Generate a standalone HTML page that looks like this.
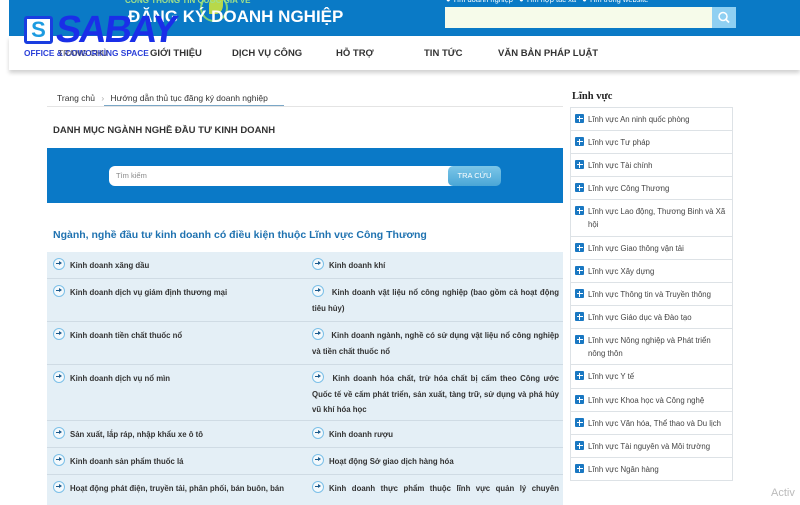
<!DOCTYPE html>
<html><head><meta charset="utf-8"><style>
*{margin:0;padding:0;box-sizing:border-box}
body{width:800px;height:500px;overflow:hidden;background:#fff;font-family:"Liberation Sans","DejaVu Sans",sans-serif;position:relative}
.a{position:absolute}
.hdr{left:9px;top:0;width:791px;height:36px;background:#0a7ac6}
.nav{left:9px;top:36px;width:791px;height:34px;background:#fff;box-shadow:0 3px 4px rgba(0,0,0,.18)}
.nv{top:48px;font-size:9.5px;font-weight:bold;color:#333}
.t{font-size:8.5px;color:#333;line-height:14px}
.row{left:47px;width:516px;background:#e4eff6;border-bottom:1px solid #cfdbe4}
.ic{display:inline-block;width:12px;height:12px;border:1.5px solid #7cc0e8;border-radius:50%;vertical-align:-2px;margin-right:5px;position:relative;background:#f4f9fc}
.ic:after{content:"";position:absolute;left:2px;top:3.7px;width:4px;height:1.4px;background:#1c5a8c}
.ic:before{content:"";position:absolute;left:4.5px;top:2.4px;border-left:3px solid #1c5a8c;border-top:2px solid transparent;border-bottom:2px solid transparent}
.c{position:absolute;font-size:7.8px;font-weight:bold;color:#333;line-height:15.5px}
.si{left:570px;width:163px;border:1px solid #dde2e6;border-top:none;font-size:7.8px;color:#444;line-height:13px;padding:5px 4px 0 17px;background:#fff}
.pl{position:absolute;left:4px;top:6px;width:9px;height:9px;background:#1a78c2;border-radius:1px}
.pl:before{content:"";position:absolute;left:3.6px;top:1.5px;width:1.8px;height:6px;background:#fff}
.pl:after{content:"";position:absolute;left:1.5px;top:3.6px;width:6px;height:1.8px;background:#fff}
</style></head><body>
<div class="a hdr"></div>
<div class="a" style="left:195px;top:0;width:40px;height:36px;border-radius:50%;"><div style="position:absolute;left:5px;top:-6px;width:28px;height:28px;border-radius:50%;border:2px solid #7fd07a;border-top-color:transparent"></div><div style="position:absolute;left:14px;top:-4px;width:14px;height:18px;background:#b8d84a;border-radius:50% 0 50% 0"></div></div>
<div class="a" style="left:125px;top:-4px;font-size:8px;color:#9fe08a;font-weight:bold">CỔNG THÔNG TIN QUỐC GIA VỀ</div>
<div class="a" style="left:128px;top:7px;font-size:17px;color:#fff;font-weight:bold">ĐĂNG KÝ DOANH NGHIỆP</div>
<div class="a" style="left:446px;top:-5px;font-size:7.5px;color:#fff">● Tìm doanh nghiệp &nbsp; ● Tìm hợp tác xã &nbsp; ● Tìm trong website</div>
<div class="a" style="left:445px;top:7px;width:267px;height:21px;background:#f6fbea"></div>
<div class="a" style="left:712px;top:7px;width:24px;height:21px;background:#8fd0f2"><svg width="24" height="21"><circle cx="11" cy="9.5" r="4" fill="none" stroke="#fff" stroke-width="1.5"/><line x1="14" y1="12.5" x2="17" y2="15.5" stroke="#fff" stroke-width="1.8"/></svg></div>
<div class="a nav"></div>
<div class="a nv" style="left:150px">GIỚI THIỆU</div>
<div class="a nv" style="left:232px">DỊCH VỤ CÔNG</div>
<div class="a nv" style="left:336px">HỖ TRỢ</div>
<div class="a nv" style="left:424px">TIN TỨC</div>
<div class="a nv" style="left:498px">VĂN BẢN PHÁP LUẬT</div>
<!-- logo -->
<div class="a" style="left:24px;top:16px;width:29px;height:28px;border:3px solid #1a3ee0;border-radius:3px;background:#fff"><div style="font-size:22px;font-weight:bold;color:#1d9be0;line-height:22px;text-align:center">S</div></div>
<div class="a" style="left:56px;top:10px;font-size:38px;font-weight:900;color:#1a2ee8;letter-spacing:-2px;line-height:40px;transform:skewX(-8deg)">SABAY</div>
<div class="a" style="left:24px;top:48px;font-size:8.3px;font-weight:bold;color:#2a3fd8">OFFICE &amp; COWORKING SPACE</div>
<div class="a" style="left:58px;top:48px;font-size:8.3px;font-weight:bold;color:#334;opacity:.6">TRANG CHỦ</div>
<!-- breadcrumb -->
<div class="a t" style="left:57px;top:91px">Trang chủ <span style="color:#aaa;margin:0 4px">›</span> Hướng dẫn thủ tục đăng ký doanh nghiệp</div>
<div class="a" style="left:47px;top:106px;width:516px;height:1px;background:#e4e4e4"></div>
<div class="a" style="left:104px;top:105px;width:180px;height:1px;background:#7aa7c7"></div>
<div class="a" style="left:53px;top:125px;font-size:9.5px;font-weight:bold;color:#333">DANH MỤC NGÀNH NGHỀ ĐẦU TƯ KINH DOANH</div>
<div class="a" style="left:47px;top:148px;width:516px;height:55px;background:#0a79c7"></div>
<div class="a" style="left:109px;top:166px;width:350px;height:20px;background:#fff;border-radius:6px;font-size:7.5px;color:#888;padding:5px 7px">Tìm kiếm</div>
<div class="a" style="left:448px;top:166px;width:53px;height:20px;background:linear-gradient(#7cc6e8,#4aa6d6);border-radius:5px;font-size:7.5px;color:#fff;text-align:center;line-height:20px">TRA CỨU</div>
<div class="a" style="left:53px;top:229px;font-size:10.5px;font-weight:bold;color:#1f72b0">Ngành, nghề đầu tư kinh doanh có điều kiện thuộc Lĩnh vực Công Thương</div>
<!-- rows -->
<div class="a row" style="top:252px;height:27px"><div class="c" style="left:6px;top:6px"><i class="ic"></i>Kinh doanh xăng dầu</div><div class="c" style="left:265px;top:6px"><i class="ic"></i>Kinh doanh khí</div></div>
<div class="a row" style="top:279px;height:43px"><div class="c" style="left:6px;top:6px"><i class="ic"></i>Kinh doanh dịch vụ giám định thương mại</div><div class="c" style="left:265px;top:6px;width:247px;text-align:justify"><i class="ic"></i> Kinh doanh vật liệu nổ công nghiệp (bao gồm cả hoạt động tiêu hủy)</div></div>
<div class="a row" style="top:322px;height:43px"><div class="c" style="left:6px;top:6px"><i class="ic"></i>Kinh doanh tiền chất thuốc nổ</div><div class="c" style="left:265px;top:6px;width:247px;text-align:justify"><i class="ic"></i> Kinh doanh ngành, nghề có sử dụng vật liệu nổ công nghiệp và tiền chất thuốc nổ</div></div>
<div class="a row" style="top:365px;height:56px"><div class="c" style="left:6px;top:6px"><i class="ic"></i>Kinh doanh dịch vụ nổ mìn</div><div class="c" style="left:265px;top:6px;width:247px;text-align:justify"><i class="ic"></i> Kinh doanh hóa chất, trừ hóa chất bị cấm theo Công ước Quốc tế về cấm phát triển, sản xuất, tàng trữ, sử dụng và phá hủy vũ khí hóa học</div></div>
<div class="a row" style="top:421px;height:27px"><div class="c" style="left:6px;top:6px"><i class="ic"></i>Sản xuất, lắp ráp, nhập khẩu xe ô tô</div><div class="c" style="left:265px;top:6px"><i class="ic"></i>Kinh doanh rượu</div></div>
<div class="a row" style="top:448px;height:27px"><div class="c" style="left:6px;top:6px"><i class="ic"></i>Kinh doanh sản phẩm thuốc lá</div><div class="c" style="left:265px;top:6px"><i class="ic"></i>Hoạt động Sở giao dịch hàng hóa</div></div>
<div class="a row" style="top:475px;height:30px;border:none"><div class="c" style="left:6px;top:6px;white-space:nowrap"><i class="ic"></i>Hoạt động phát điện, truyền tải, phân phối, bán buôn, bán</div><div class="c" style="left:265px;top:6px;width:247px;text-align:justify;text-align-last:justify"><i class="ic"></i>Kinh doanh thực phẩm thuộc lĩnh vực quản lý chuyên</div></div>
<!-- sidebar -->
<div class="a" style="left:572px;top:91px;font-family:'Liberation Serif',serif;font-weight:bold;font-size:10.5px;color:#222">Lĩnh vực</div>
<div class="a" style="left:570px;top:107px;width:163px;height:1px;background:#dde2e6"></div>
<div class="a si" style="top:108px;height:23px"><i class="pl"></i>Lĩnh vực An ninh quốc phòng</div>
<div class="a si" style="top:131px;height:23px"><i class="pl"></i>Lĩnh vực Tư pháp</div>
<div class="a si" style="top:154px;height:23px"><i class="pl"></i>Lĩnh vực Tài chính</div>
<div class="a si" style="top:177px;height:23px"><i class="pl"></i>Lĩnh vực Công Thương</div>
<div class="a si" style="top:200px;height:37px"><i class="pl"></i>Lĩnh vực Lao động, Thương Binh và Xã hội</div>
<div class="a si" style="top:237px;height:23px"><i class="pl"></i>Lĩnh vực Giao thông vận tải</div>
<div class="a si" style="top:260px;height:23px"><i class="pl"></i>Lĩnh vực Xây dựng</div>
<div class="a si" style="top:283px;height:23px"><i class="pl"></i>Lĩnh vực Thông tin và Truyền thông</div>
<div class="a si" style="top:306px;height:23px"><i class="pl"></i>Lĩnh vực Giáo dục và Đào tạo</div>
<div class="a si" style="top:329px;height:36px"><i class="pl"></i>Lĩnh vực Nông nghiệp và Phát triển nông thôn</div>
<div class="a si" style="top:365px;height:24px"><i class="pl"></i>Lĩnh vực Y tế</div>
<div class="a si" style="top:389px;height:23px"><i class="pl"></i>Lĩnh vực Khoa học và Công nghệ</div>
<div class="a si" style="top:412px;height:23px"><i class="pl"></i>Lĩnh vực Văn hóa, Thể thao và Du lịch</div>
<div class="a si" style="top:435px;height:23px"><i class="pl"></i>Lĩnh vực Tài nguyên và Môi trường</div>
<div class="a si" style="top:458px;height:23px"><i class="pl"></i>Lĩnh vực Ngân hàng</div>
<div class="a" style="left:771px;top:487px;font-size:11px;color:#bbb">Activ</div>
</body></html>
